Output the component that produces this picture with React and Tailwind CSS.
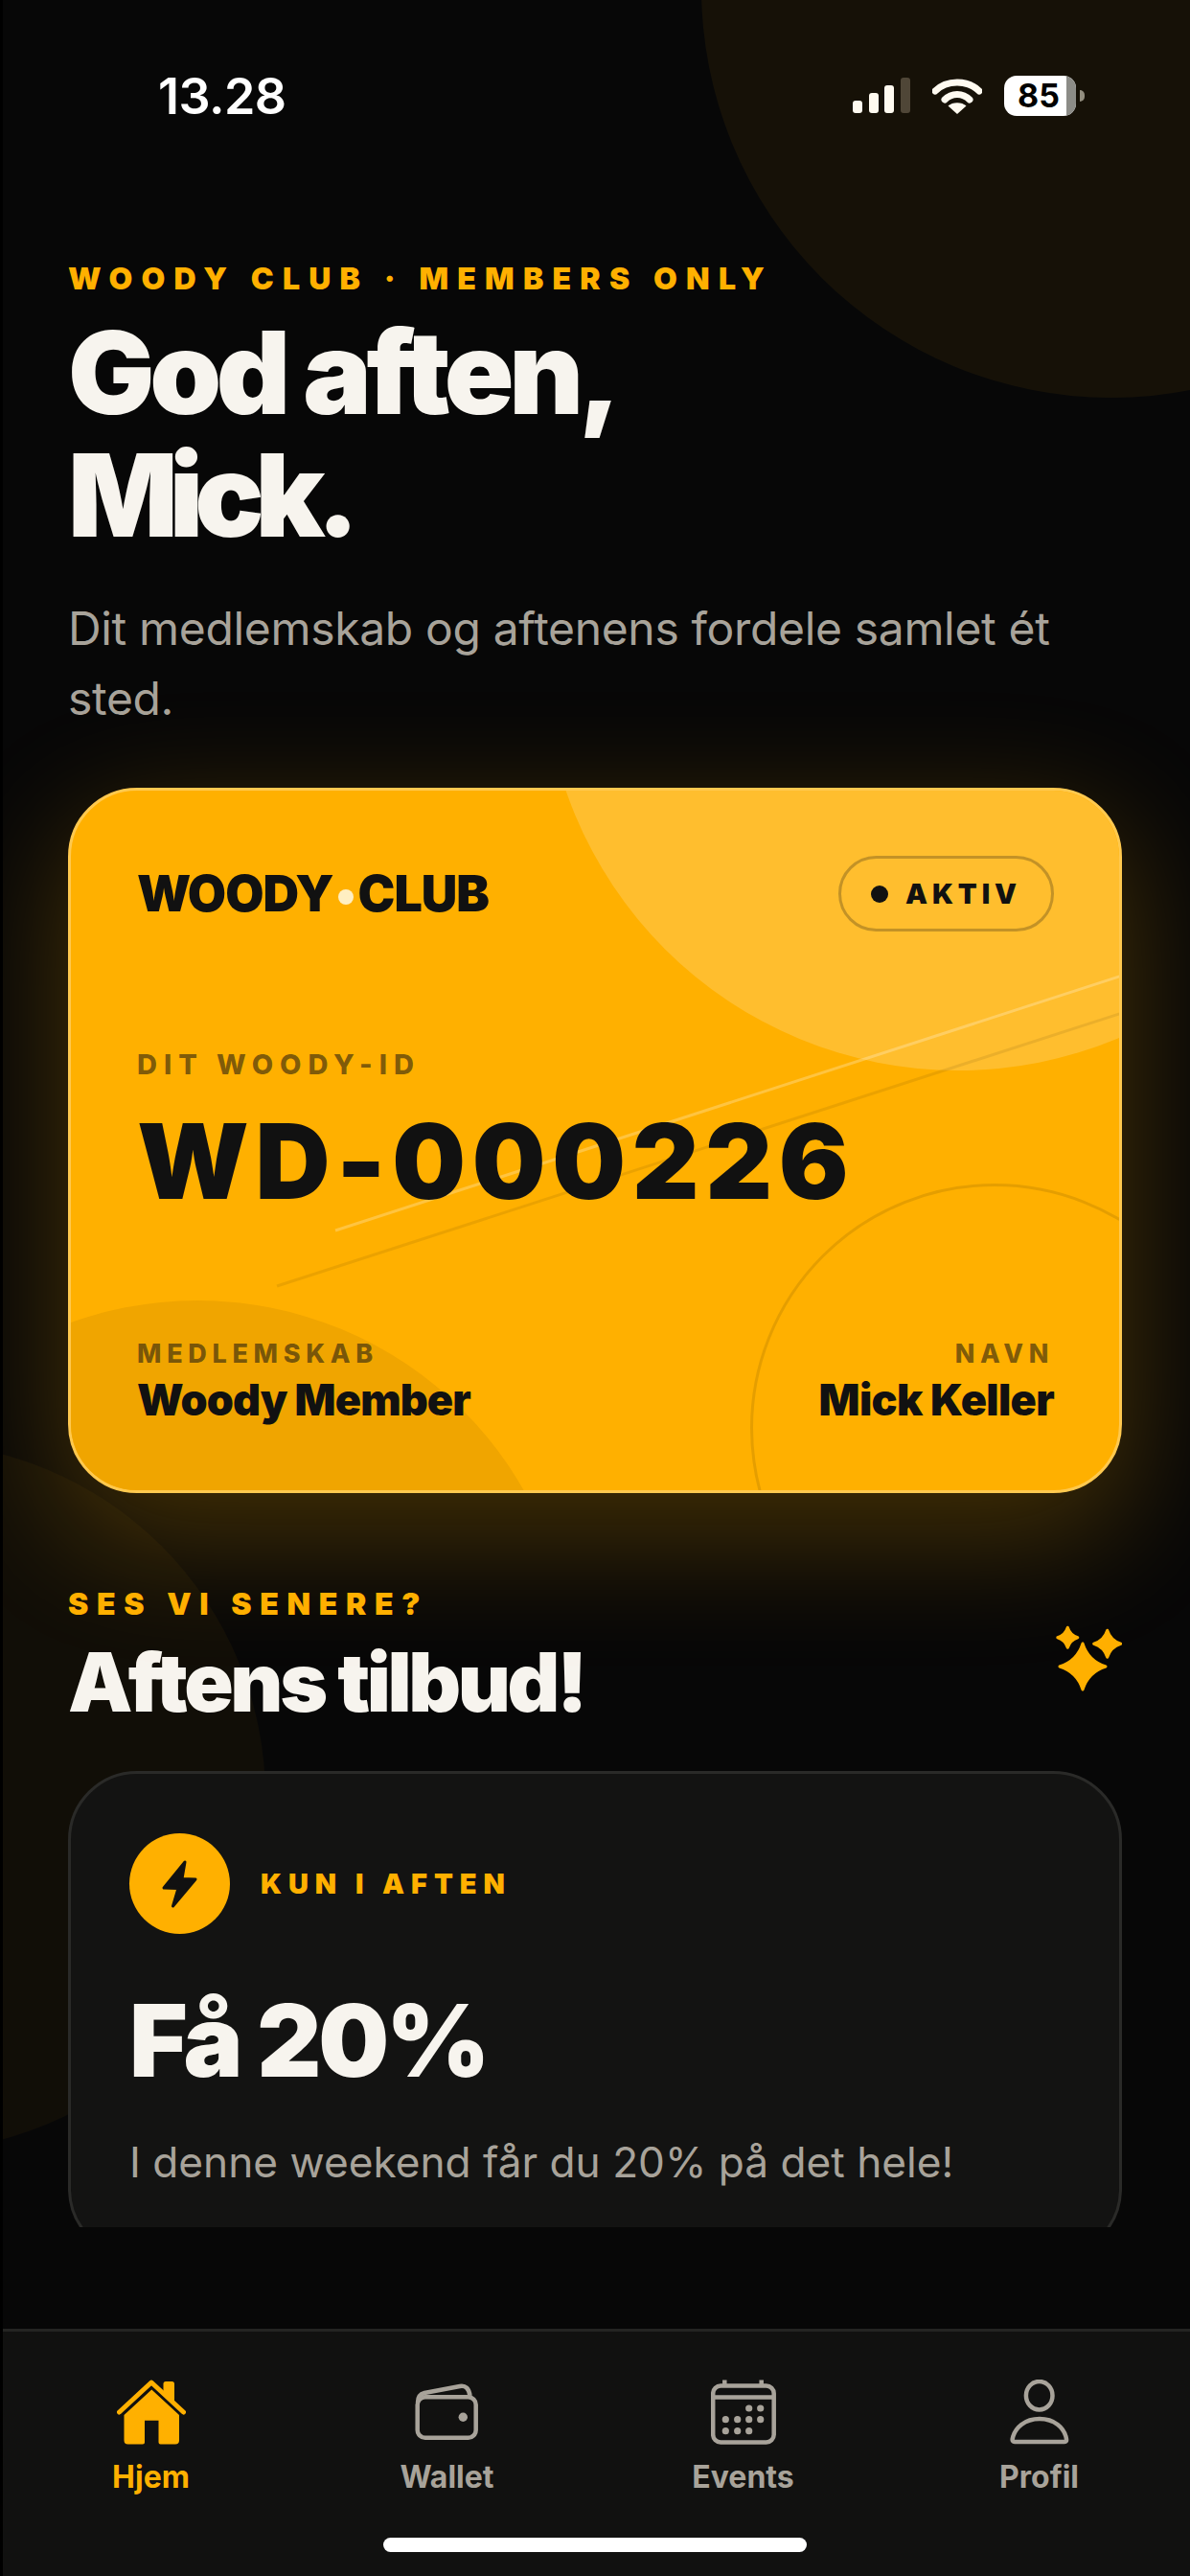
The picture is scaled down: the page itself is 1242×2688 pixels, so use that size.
const sans = { fontFamily: 'Inter, "Noto Sans", sans-serif' }

function StatusBar() {
  return (
    <div className="flex h-[263px] shrink-0 items-start justify-between pl-[162px] pr-[110px] pt-[71px] text-white">
      <span className="text-[52px] font-semibold leading-[60px] tracking-[-0.01em]">13.28</span>
      <div className="flex items-center pt-[8px]">
        <svg width="60" height="38" viewBox="0 0 60 38" className="mr-[23px]">
          <rect x="0" y="24" width="10" height="13" rx="3" fill="#fff" />
          <rect x="17" y="16" width="10" height="21" rx="3" fill="#fff" />
          <rect x="33" y="8" width="10" height="29" rx="3" fill="#fff" />
          <rect x="50" y="0" width="10" height="37" rx="3" fill="#443f3a" />
        </svg>
        <svg width="52" height="38" viewBox="0 0 52 38" className="mr-[23px]">
          <path d="M3 14 C15 2 37 2 49 14" fill="none" stroke="#fff" strokeWidth="7" strokeLinecap="round" />
          <path d="M13 23 C20 15.5 32 15.5 39 23" fill="none" stroke="#fff" strokeWidth="7" strokeLinecap="round" />
          <path d="M26 38 L16.5 29.5 C21 25 31 25 35.5 29.5 Z" fill="#fff" />
        </svg>
        <div className="flex items-center">
          <div className="relative flex h-[42px] w-[75px] items-center overflow-hidden rounded-[13px] bg-white pl-[14px]">
            <span className="text-[34px] font-bold leading-none text-black">85</span>
            <div className="absolute inset-y-0 right-0 w-[10px] bg-[#8c8c87]" />
          </div>
          <div className="ml-[4px] h-[12px] w-[5px] rounded-r-full bg-[#8c8c87]" />
        </div>
      </div>
    </div>
  )
}

function Sparkle({ cx, cy, r }) {
  const k = r * 0.24
  return (
    <path
      d={`M${cx} ${cy - r} Q${cx + k} ${cy - k} ${cx + r} ${cy} Q${cx + k} ${cy + k} ${cx} ${cy + r} Q${cx - k} ${cy + k} ${cx - r} ${cy} Q${cx - k} ${cy - k} ${cx} ${cy - r} Z`}
      fill="#ffb000"
      stroke="#ffb000"
      strokeWidth="3"
      strokeLinejoin="round"
    />
  )
}

function MemberCard() {
  return (
    <div className="relative mt-[57px] h-[736px] shrink-0 overflow-hidden rounded-[72px] border-[3px] border-[#ffc94f] bg-[#ffb000] shadow-[0_40px_130px_10px_rgba(255,176,0,0.24)]">
      {/* decor */}
      <div className="absolute left-[493px] top-[-574px] h-[866px] w-[866px] rounded-full bg-[#ffbe2e]" />
      <div className="absolute left-[-260px] top-[532px] h-[784px] w-[784px] rounded-full bg-[#f0a500]" />
      <div className="absolute left-[709px] top-[410px] h-[510px] w-[510px] rounded-full border-[3px] border-black/10" />
      <svg className="absolute inset-0" width="1094" height="730" viewBox="0 0 1094 730">
        <line x1="276" y1="459" x2="1097" y2="193" stroke="#ffffff" strokeOpacity="0.25" strokeWidth="3" />
        <line x1="215" y1="517" x2="1097" y2="232" stroke="#000000" strokeOpacity="0.08" strokeWidth="3" />
      </svg>

      <div className="relative flex h-full flex-col pl-[69px] pr-[68px] pt-[68px] text-[#111111]">
        <div className="flex h-[79px] items-center justify-between">
          <div className="flex items-center text-[52px] font-black leading-none tracking-[-0.02em]">
            WOODY
            <span className="mx-[5px] mt-[6px] h-[16px] w-[16px] rounded-full bg-[#ffefc2]" />
            CLUB
          </div>
          <div className="flex h-[79px] w-[225px] items-center justify-center gap-[18px] rounded-full border-[3px] border-[#111111]/25 text-[29px] font-black leading-none tracking-[0.17em]">
            <span className="h-[18px] w-[18px] rounded-full bg-[#111111]" />
            AKTIV
          </div>
        </div>

        <div className="mt-[123px] text-[29px] font-extrabold leading-[32px] tracking-[0.24em] text-[#111111]/55">DIT WOODY-ID</div>
        <div className="mt-[25px] text-[108px] font-black leading-[120px] tracking-[0.062em]">WD-000226</div>

        <div className="mt-[126px] flex items-start justify-between">
          <div>
            <div className="text-[27px] font-extrabold leading-[30px] tracking-[0.21em] text-[#111111]/55">MEDLEMSKAB</div>
            <div className="mt-[7px] text-[45px] font-black leading-[52px] tracking-[-0.02em]">Woody Member</div>
          </div>
          <div className="text-right">
            <div className="text-[27px] font-extrabold leading-[30px] tracking-[0.21em] text-[#111111]/55">NAVN</div>
            <div className="mt-[7px] text-[45px] font-black leading-[52px] tracking-[-0.015em]">Mick Keller</div>
          </div>
        </div>
      </div>
    </div>
  )
}

function OfferCard() {
  return (
    <div className="mt-[47px] h-[508px] shrink-0 rounded-[72px] border-[3px] border-[#2a2a28] bg-[#131312] pl-[61px] pt-[62px]">
      <div className="flex items-center gap-[32px]">
        <div className="flex h-[105px] w-[105px] items-center justify-center rounded-full bg-[#ffb000]">
          <svg width="39" height="52" viewBox="0 0 39 52">
            <path d="M25 3 L3 30 L18 30.5 L12.5 49 L36 21 L22 20.5 Z" fill="#111111" stroke="#111111" strokeWidth="3" strokeLinejoin="round" />
          </svg>
        </div>
        <span className="text-[29px] font-black leading-none tracking-[0.24em] text-[#ffb000]">KUN I AFTEN</span>
      </div>
      <div className="mt-[51px] text-[104px] font-black leading-[120px] tracking-[-0.03em] text-[#f7f4ee]">Få 20%</div>
      <p className="mt-[37px] text-[44.2px] leading-[60px] text-[#a8a39a]">I denne weekend får du 20% på det hele!</p>
    </div>
  )
}

function NavItem({ label, active, icon }) {
  return (
    <div className={`flex flex-col items-center ${active ? 'text-[#ffb000]' : 'text-[#a8a39a]'}`}>
      <div className="flex h-[68px] items-center">{icon}</div>
      <span className="mt-[14px] text-[32px] font-bold leading-[40px]">{label}</span>
    </div>
  )
}

function BottomNav() {
  const stroke = { fill: 'none', stroke: '#a8a39a', strokeWidth: 4.5 }
  return (
    <div className="relative h-[258px] shrink-0 border-t-[3px] border-[#242422] bg-[#111110]">
      <div className="grid grid-cols-4 pr-[3px] pt-[50px]">
        <NavItem
          label="Hjem"
          active
          icon={
            <svg width="72" height="68" viewBox="0 0 72 68">
              <path d="M48.5 14 V4.5 q0 -2.5 2.5 -2.5 h6.5 q2.5 0 2.5 2.5 V24 Z" fill="#ffb000" />
              <path d="M2.5 34 L36 3 L69.5 34" fill="none" stroke="#ffb000" strokeWidth="5" strokeLinecap="round" strokeLinejoin="round" />
              <path d="M36.3 10.5 L65 37 V63.5 q0 4 -4 4 H45.5 q-2 0 -2 -2 V42.7 H29 V65.5 q0 2 -2 2 H11.5 q-4 0 -4 -4 V37 Z" fill="#ffb000" />
            </svg>
          }
        />
        <NavItem
          label="Wallet"
          icon={
            <svg width="68" height="60" viewBox="0 0 68 60">
              <rect x="2.7" y="14.3" width="61" height="42.5" rx="8" {...stroke} />
              <path d="M3 20 C3 14 6 11 10 10 L47 3 Q56 1.5 57.5 13" {...stroke} />
              <circle cx="50.3" cy="35.3" r="4.7" fill="#a8a39a" />
            </svg>
          }
        />
        <NavItem
          label="Events"
          icon={
            <svg width="68" height="68" viewBox="0 0 68 68">
              <rect x="2.2" y="6.5" width="63.5" height="59" rx="8" {...stroke} />
              <path d="M2 18.5 H66 M14.3 0.5 V6 M52.7 0.5 V6" {...stroke} />
              {[[39.7, 30], [51.7, 30], [15.3, 41.7], [27.7, 41.7], [39.7, 41.7], [51.7, 41.7], [15.3, 53.7], [27.7, 53.7], [39.7, 53.7]].map(([cx, cy]) => (
                <circle key={`${cx}-${cy}`} cx={cx} cy={cy} r="3.6" fill="#a8a39a" />
              ))}
            </svg>
          }
        />
        <NavItem
          label="Profil"
          icon={
            <svg width="62" height="68" viewBox="0 0 62 68">
              <ellipse cx="30.7" cy="16.7" rx="13.8" ry="14.7" {...stroke} />
              <path d="M5 65 H57 Q59.5 65 59 62 C57 50 46 41 31 41 C16 41 5 50 2.7 62 Q2.3 65 5 65 Z" {...stroke} />
            </svg>
          }
        />
      </div>
      <div className="absolute bottom-[25px] left-[397px] h-[15px] w-[442px] rounded-full bg-white" />
    </div>
  )
}

export default function App() {
  return (
    <div className="h-[2688px] w-[1242px] overflow-hidden bg-black pl-[3px]" style={sans}>
      <div className="relative flex h-full flex-col overflow-hidden bg-[#070707]">
        {/* background blobs */}
        <div className="absolute left-[729px] top-[-441px] h-[856px] w-[856px] rounded-full bg-[#ffb000]/6" />
        <div className="absolute left-[-466px] top-[1505px] h-[740px] w-[740px] rounded-full bg-[#ffb000]/4" />

        <StatusBar />

        <main className="relative flex h-[2061px] shrink-0 flex-col overflow-hidden pl-[68px] pr-[71px] pt-[10px]">
          <div className="text-[32px] font-black leading-[36px] tracking-[0.288em] text-[#ffb000]">WOODY CLUB · MEMBERS ONLY</div>
          <h1 className="mt-[16px] text-[120px] font-black leading-[128px] tracking-[-0.045em] text-[#f7f4ee]">
            God aften,
            <br />
            <span className="tracking-[-0.075em]">Mick.</span>
          </h1>
          <p className="mt-[38px] text-[48px] leading-[73px] tracking-[-0.007em] text-[#a8a39a]">Dit medlemskab og aftenens fordele samlet ét sted.</p>

          <MemberCard />

          <div className="mt-[98px] flex shrink-0 items-start justify-between">
            <div>
              <div className="text-[32px] font-black leading-[36px] tracking-[0.27em] text-[#ffb000]">SES VI SENERE?</div>
              <h2 className="mt-[19px] text-[85px] font-black leading-[90px] tracking-[-0.04em] text-[#f7f4ee]">Aftens tilbud!</h2>
            </div>
            <svg width="70" height="72" viewBox="42 22 70 72" className="mt-[38px]">
              <Sparkle cx={55.3} cy={36.7} r={10.5} />
              <Sparkle cx={96.7} cy={43.3} r={14} />
              <Sparkle cx={71} cy={67} r={24} />
            </svg>
          </div>

          <OfferCard />
        </main>

        <div className="flex-1" />
        <BottomNav />
      </div>
    </div>
  )
}
